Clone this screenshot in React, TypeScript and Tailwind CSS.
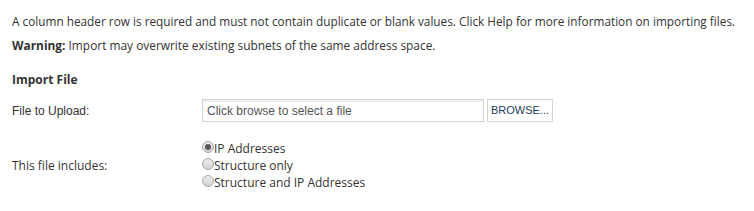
export default function App() {
    return (
        <div className="h-[211px] w-[754px] bg-white px-3 pt-[13px] text-[12px] text-[#333]" style={{ fontFamily: '"Open Sans", sans-serif' }}>
            <p className="whitespace-nowrap text-[11.8px] leading-[17px]">
                A column header row is required and must not contain duplicate or blank values. Click Help for more information on importing files.
            </p>
            <p className="mt-[7px] text-[11.9px] leading-[17px]">
                <strong className="font-bold">Warning:</strong> Import may overwrite existing subnets of the same address space.
            </p>

            <h3 className="mt-[17px] font-bold leading-[17px]">Import File</h3>

            {/* File row */}
            <div className="mt-[11px] flex items-center">
                <label className="w-[190px] font-['Liberation_Sans',Arial,sans-serif] text-[12px]">File to Upload:</label>
                <div className="flex h-[23px] w-[282px] items-center border border-[#d4d4d4] bg-white px-[4px] font-['Liberation_Sans',Arial,sans-serif] text-[12px] text-[#555] shadow-[inset_0_2px_2px_rgba(0,0,0,0.08)]">
                    Click browse to select a file
                </div>
                <button className="ml-[3px] h-[23px] border border-[#d4d4d4] bg-white px-[3px] font-['Liberation_Sans',Arial,sans-serif] text-[11px] text-[#1a3a5c]">
                    BROWSE...
                </button>
            </div>

            {/* Radio row */}
            <div className="mt-[18px] flex items-center">
                <label className="w-[190px]">This file includes:</label>
                <div className="flex flex-col">
                    <Radio checked label="IP Addresses" />
                    <Radio label="Structure only" />
                    <Radio label="Structure and IP Addresses" />
                </div>
            </div>
        </div>
    );
}

function Radio({ label, checked }: { label: string; checked?: boolean }) {
    return (
        <label className="flex h-[17px] items-center">
            <span className="-mt-[3px] flex h-[12px] w-[12px] items-center justify-center rounded-full border border-[#a8a8a8] bg-gradient-to-b from-[#ececec] to-[#d2d2d2]">
                {checked && <span className="h-[6px] w-[6px] rounded-full bg-[#555]" />}
            </span>
            <span className="leading-[17px]">{label}</span>
        </label>
    );
}
